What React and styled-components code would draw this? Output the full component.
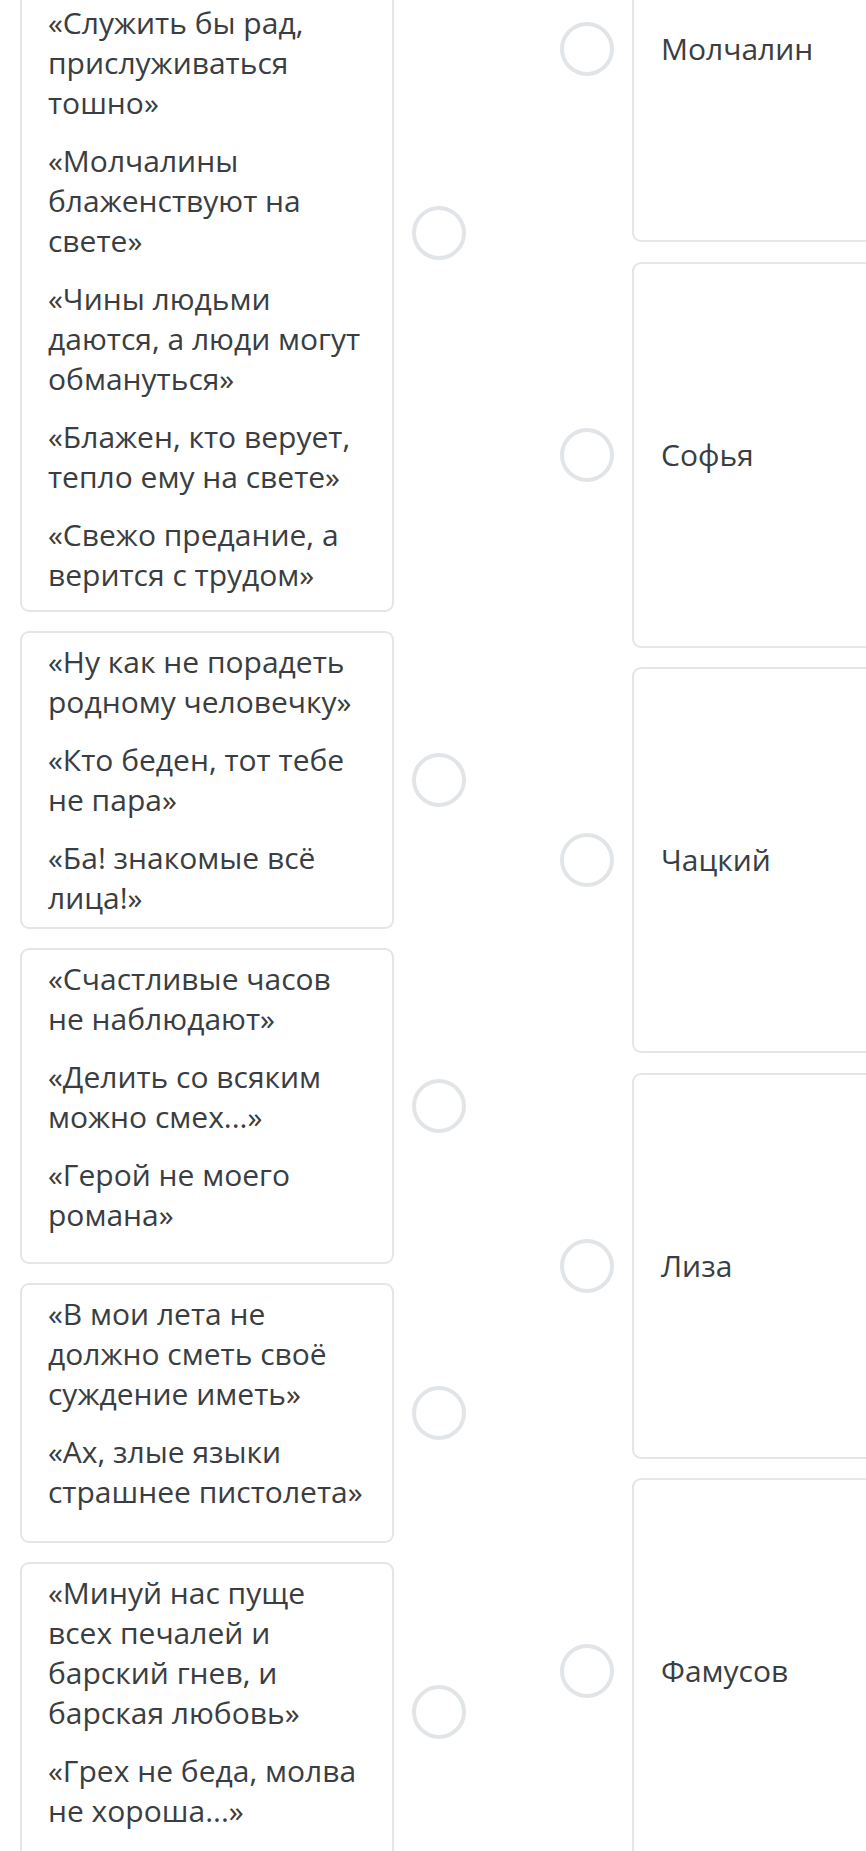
import React from "react";
import styled, { createGlobalStyle } from "styled-components";

const quotes = [
  {
    h: 758,
    lines: [
      "«Дома новы, но предрассудки стары, как и прежде»",
      "«Служить бы рад, прислуживаться тошно»",
      "«Молчалины блаженствуют на свете»",
      "«Чины людьми даются, а люди могут обмануться»",
      "«Блажен, кто верует, тепло ему на свете»",
      "«Свежо предание, а верится с трудом»",
    ],
  },
  {
    h: 298,
    lines: [
      "«Ну как не порадеть родному человечку»",
      "«Кто беден, тот тебе не пара»",
      "«Ба! знакомые всё лица!»",
    ],
  },
  {
    h: 316,
    lines: [
      "«Счастливые часов не наблюдают»",
      "«Делить со всяким можно смех...»",
      "«Герой не моего романа»",
    ],
  },
  {
    h: 260,
    lines: [
      "«В мои лета не должно сметь своё суждение иметь»",
      "«Ах, злые языки страшнее пистолета»",
    ],
  },
  {
    h: 300,
    lines: [
      "«Минуй нас пуще всех печалей и барский гнев, и барская любовь»",
      "«Грех не беда, молва не хороша...»",
    ],
  },
];

const heroes = ["Молчалин", "Софья", "Чацкий", "Лиза", "Фамусов"];

export default function App() {
  return (
    <>
      <GlobalStyle />
      <Board>
        <Column>
          {quotes.map((q, i) => (
            <LeftRow key={i}>
              <QuoteCard $h={q.h}>
                {q.lines.map((t, j) => (
                  <Quote key={j}>{t}</Quote>
                ))}
              </QuoteCard>
              <Radio />
            </LeftRow>
          ))}
        </Column>
        <Column $gap={19.5} $top={2}>
          {heroes.map((name) => (
            <RightRow key={name}>
              <Radio />
              <NameCard>{name}</NameCard>
            </RightRow>
          ))}
        </Column>
      </Board>
    </>
  );
}

const GlobalStyle = createGlobalStyle`
  html, body {
    margin: 0;
    padding: 0;
    background: #ffffff;
    overflow: hidden;
  }
  body {
    font-family: "Open Sans", "Noto Sans", sans-serif;
    color: #3a3d41;
  }
`;

const Board = styled.div`
  display: grid;
  grid-template-columns: 446px 446px;
  column-gap: 94px;
  align-items: start;
  padding-left: 20px;
  margin-top: -146px;
`;

const Column = styled.div`
  display: flex;
  flex-direction: column;
  gap: ${(p) => p.$gap || 19}px;
  padding-top: ${(p) => p.$top || 0}px;
`;

const LeftRow = styled.div`
  display: flex;
  align-items: center;
  gap: 18px;
`;

const RightRow = styled.div`
  display: flex;
  align-items: center;
  gap: 18px;
`;

const QuoteCard = styled.div`
  box-sizing: border-box;
  width: 374px;
  min-height: ${(p) => p.$h}px;
  padding: 9px 26px 9px;
  border: 2px solid #e3e6e9;
  border-radius: 9px;
  display: flex;
  flex-direction: column;
  gap: 18px;
`;

const Quote = styled.div`
  font-size: 30px;
  line-height: 40px;
`;

const NameCard = styled.div`
  box-sizing: border-box;
  width: 374px;
  height: 386px;
  padding: 0 27px;
  border: 2px solid #e3e6e9;
  border-radius: 9px;
  display: flex;
  align-items: center;
  font-size: 30px;
  line-height: 40px;
`;

const Radio = styled.span`
  box-sizing: border-box;
  flex: none;
  width: 54px;
  height: 54px;
  border: 4px solid #e2e5e8;
  border-radius: 50%;
`;
